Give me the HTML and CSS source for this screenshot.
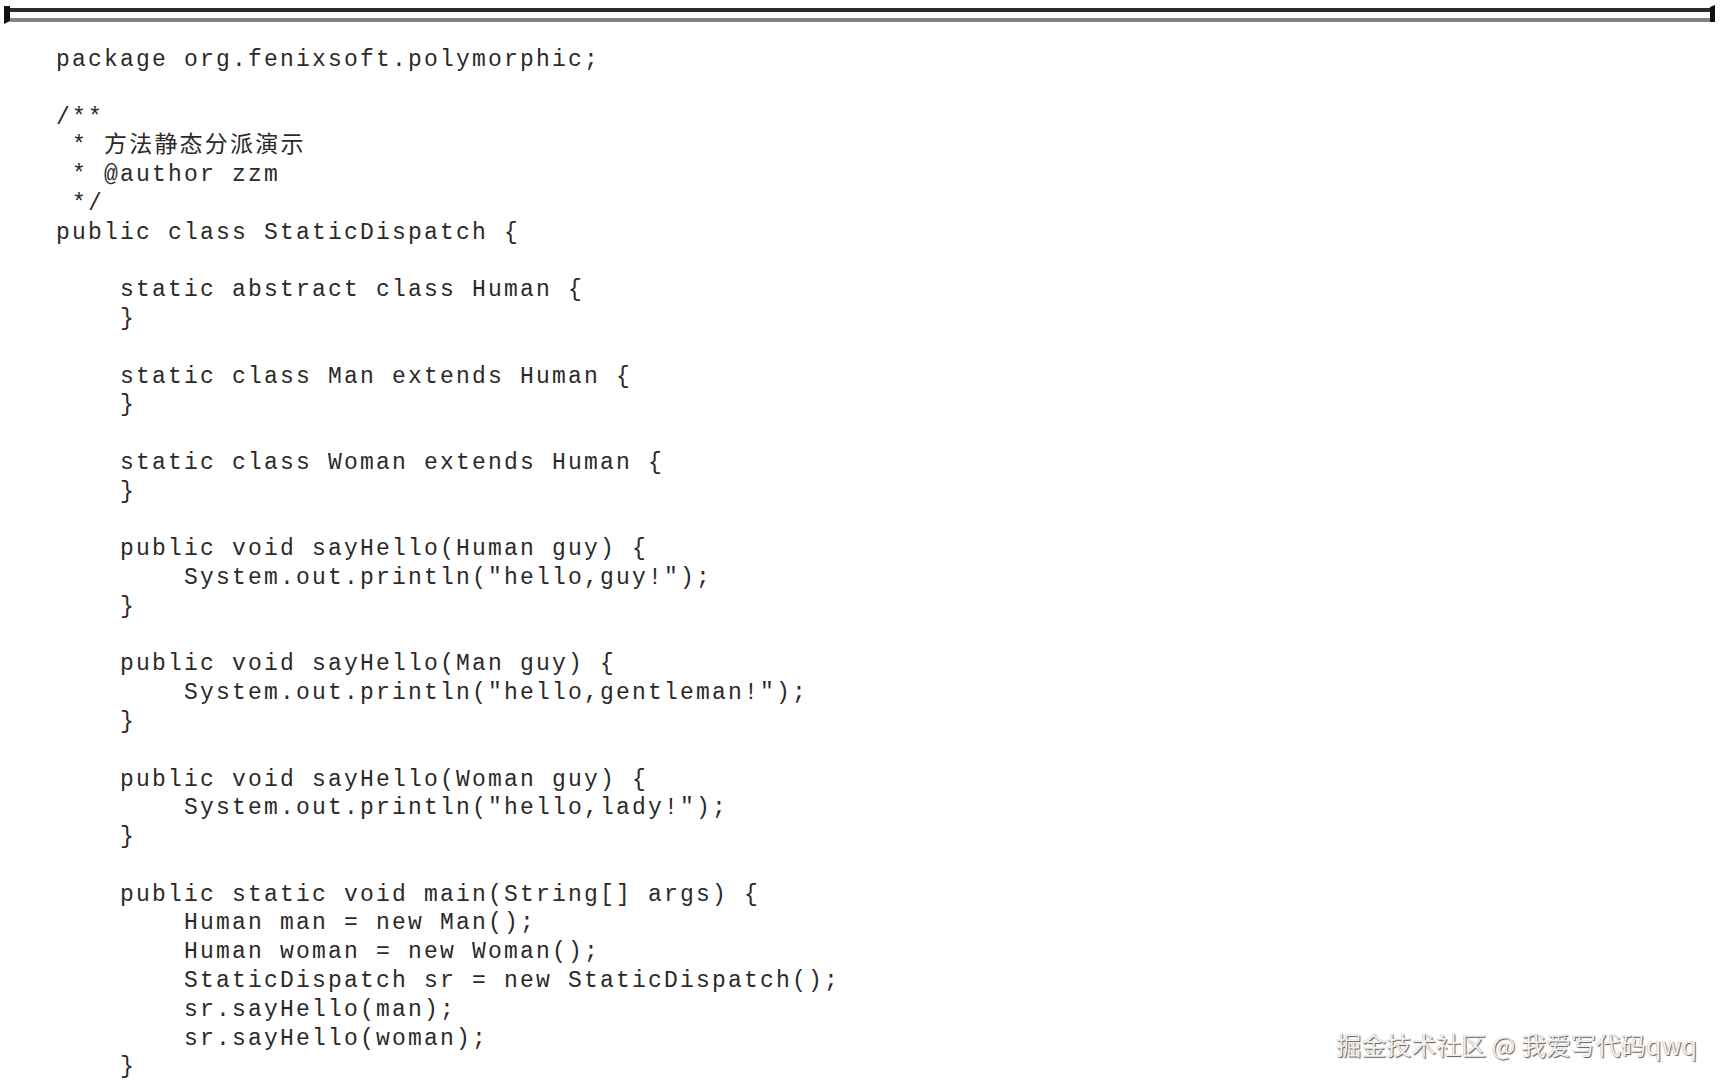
FILE: index.html
```html
<!DOCTYPE html>
<html lang="zh">
<head>
<meta charset="utf-8">
<title>StaticDispatch</title>
<link rel="stylesheet" href="styles.css">
</head>
<body>
<div class="page">
  <div class="rule">
    <div class="cap cap-left"></div>
    <div class="bars">
      <div class="bar bar-dark"></div>
      <div class="bar bar-gray"></div>
    </div>
    <div class="cap cap-right"></div>
  </div>
<pre class="code">package org.fenixsoft.polymorphic;

/**
 * 方法静态分派演示
 * @author zzm
 */
public class StaticDispatch {

    static abstract class Human {
    }

    static class Man extends Human {
    }

    static class Woman extends Human {
    }

    public void sayHello(Human guy) {
        System.out.println("hello,guy!");
    }

    public void sayHello(Man guy) {
        System.out.println("hello,gentleman!");
    }

    public void sayHello(Woman guy) {
        System.out.println("hello,lady!");
    }

    public static void main(String[] args) {
        Human man = new Man();
        Human woman = new Woman();
        StaticDispatch sr = new StaticDispatch();
        sr.sayHello(man);
        sr.sayHello(woman);
    }</pre>
  <div class="watermark">掘金技术社区 @ 我爱写代码qwq</div>
</div>
</body>
</html>
```

FILE: styles.css
```css
html, body {
  margin: 0;
  padding: 0;
  background: #ffffff;
}

.page {
  position: relative;
  width: 1727px;
  height: 1091px;
  overflow: hidden;
  background: #ffffff;
}

.rule {
  display: flex;
  align-items: flex-start;
  padding-left: 4px;
  padding-right: 12px;
}

.cap {
  background: #111111;
}

.cap-left {
  width: 6px;
  height: 18px;
  margin-top: 6px;
  clip-path: polygon(0 0, 100% 0, 100% 83%, 0 100%);
}

.cap-right {
  width: 5px;
  height: 17px;
  margin-top: 5px;
  clip-path: polygon(0 12%, 100% 0, 100% 100%, 0 100%);
}

.bars {
  flex: 1;
  display: flex;
  flex-direction: column;
  gap: 6px;
  padding-top: 8px;
}

.bar {
  height: 4px;
}

.bar-dark {
  background: #2b2b2b;
}

.bar-gray {
  background: #838383;
}

.code {
  margin: 22px 0 0 0;
  padding-left: 56px;
  font-family: "Liberation Mono", "Noto Sans CJK SC", monospace;
  font-size: 23px;
  letter-spacing: 2.2px;
  line-height: 28.78px;
  color: #2a2a2a;
  white-space: pre;
}

.watermark {
  position: absolute;
  right: 30px;
  bottom: 34px;
  font-family: "Noto Sans CJK SC", "Noto Sans", sans-serif;
  font-size: 25px;
  line-height: 1;
  color: #f2f2f2;
  text-shadow: 1px 1px 1px rgba(0, 0, 0, 0.65), -0.5px -0.5px 0 rgba(0, 0, 0, 0.25);
  white-space: nowrap;
}
```
